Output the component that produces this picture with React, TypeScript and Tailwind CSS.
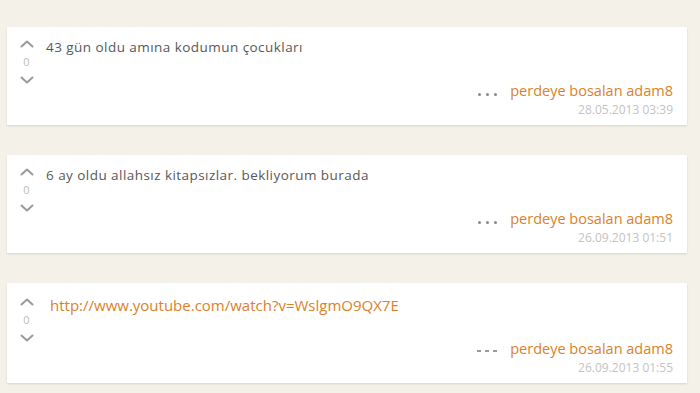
import React from "react";

const Up = () => (
  <svg width="14" height="8" viewBox="0 0 14 8" fill="none">
    <polyline points="1.5,6.5 7,1.5 12.5,6.5" stroke="#9a9a9a" strokeWidth="2" strokeLinecap="round" strokeLinejoin="round" />
  </svg>
);
const Down = () => (
  <svg width="14" height="8" viewBox="0 0 14 8" fill="none">
    <polyline points="1.5,1.5 7,6.5 12.5,1.5" stroke="#9a9a9a" strokeWidth="2" strokeLinecap="round" strokeLinejoin="round" />
  </svg>
);

type Entry = { text: string; link?: boolean; date: string; dashes?: boolean };

const entries: Entry[] = [
  { text: "43 gün oldu amına kodumun çocukları", date: "28.05.2013 03:39" },
  { text: "6 ay oldu allahsız kitapsızlar. bekliyorum burada", date: "26.09.2013 01:51" },
  { text: "http://www.youtube.com/watch?v=WslgmO9QX7E", link: true, date: "26.09.2013 01:55", dashes: true },
];

function Card({ e }: { e: Entry }) {
  return (
    <div
      className={`flex bg-white shadow-[0_1px_2px_rgba(0,0,0,0.12)] ${e.dashes ? "h-[100px] pt-[14px]" : "h-[98px] pt-[12px]"} pb-[8px] pr-[14px]`}
    >
      <div className="flex w-[39px] shrink-0 flex-col items-center pt-[1px]">
        <Up />
        <div className="mt-[7px] text-[11px] leading-[14px] text-[#bdbdbd]">0</div>
        <div className="mt-[7px]"><Down /></div>
      </div>
      <div className="flex flex-1 flex-col">
        <div
          className={
            e.link
              ? "pl-[4px] text-[15px] leading-[17px] text-[#d9822b]"
              : "text-[13.5px] leading-[16px] tracking-[0.45px] text-[#585858]"
          }
        >
          {e.text}
        </div>
        <div className="mt-auto flex flex-col items-end">
          <div className="flex items-center">
            {e.dashes ? (
              <div className="mr-[13px] mt-[4px] flex gap-[4px]">
                <span className="block h-[1.5px] w-[4px] bg-[#999]" />
                <span className="block h-[1.5px] w-[4px] bg-[#999]" />
                <span className="block h-[1.5px] w-[4px] bg-[#999]" />
              </div>
            ) : (
              <div className="mr-[13px] mt-[6px] flex gap-[5px]">
                <span className="block h-[3px] w-[3px] rounded-full bg-[#8a8a8a]" />
                <span className="block h-[3px] w-[3px] rounded-full bg-[#8a8a8a]" />
                <span className="block h-[3px] w-[3px] rounded-full bg-[#8a8a8a]" />
              </div>
            )}
            <span className="text-[14.5px] leading-[18px] text-[#d9822b]">perdeye bosalan adam8</span>
          </div>
          <div className="mt-[3px] text-[12px] leading-[14px] text-[#c4c4c4]">{e.date}</div>
        </div>
      </div>
    </div>
  );
}

export default function App() {
  return (
    <div
      className="h-[393px] w-[700px] overflow-hidden bg-[#f4f1e8] pl-[7px] pr-[13px] pt-[27px]"
      style={{ fontFamily: '"Open Sans", sans-serif' }}
    >
      <div className="flex flex-col gap-[30px]">
        {entries.map((e, i) => (
          <Card key={i} e={e} />
        ))}
      </div>
    </div>
  );
}
